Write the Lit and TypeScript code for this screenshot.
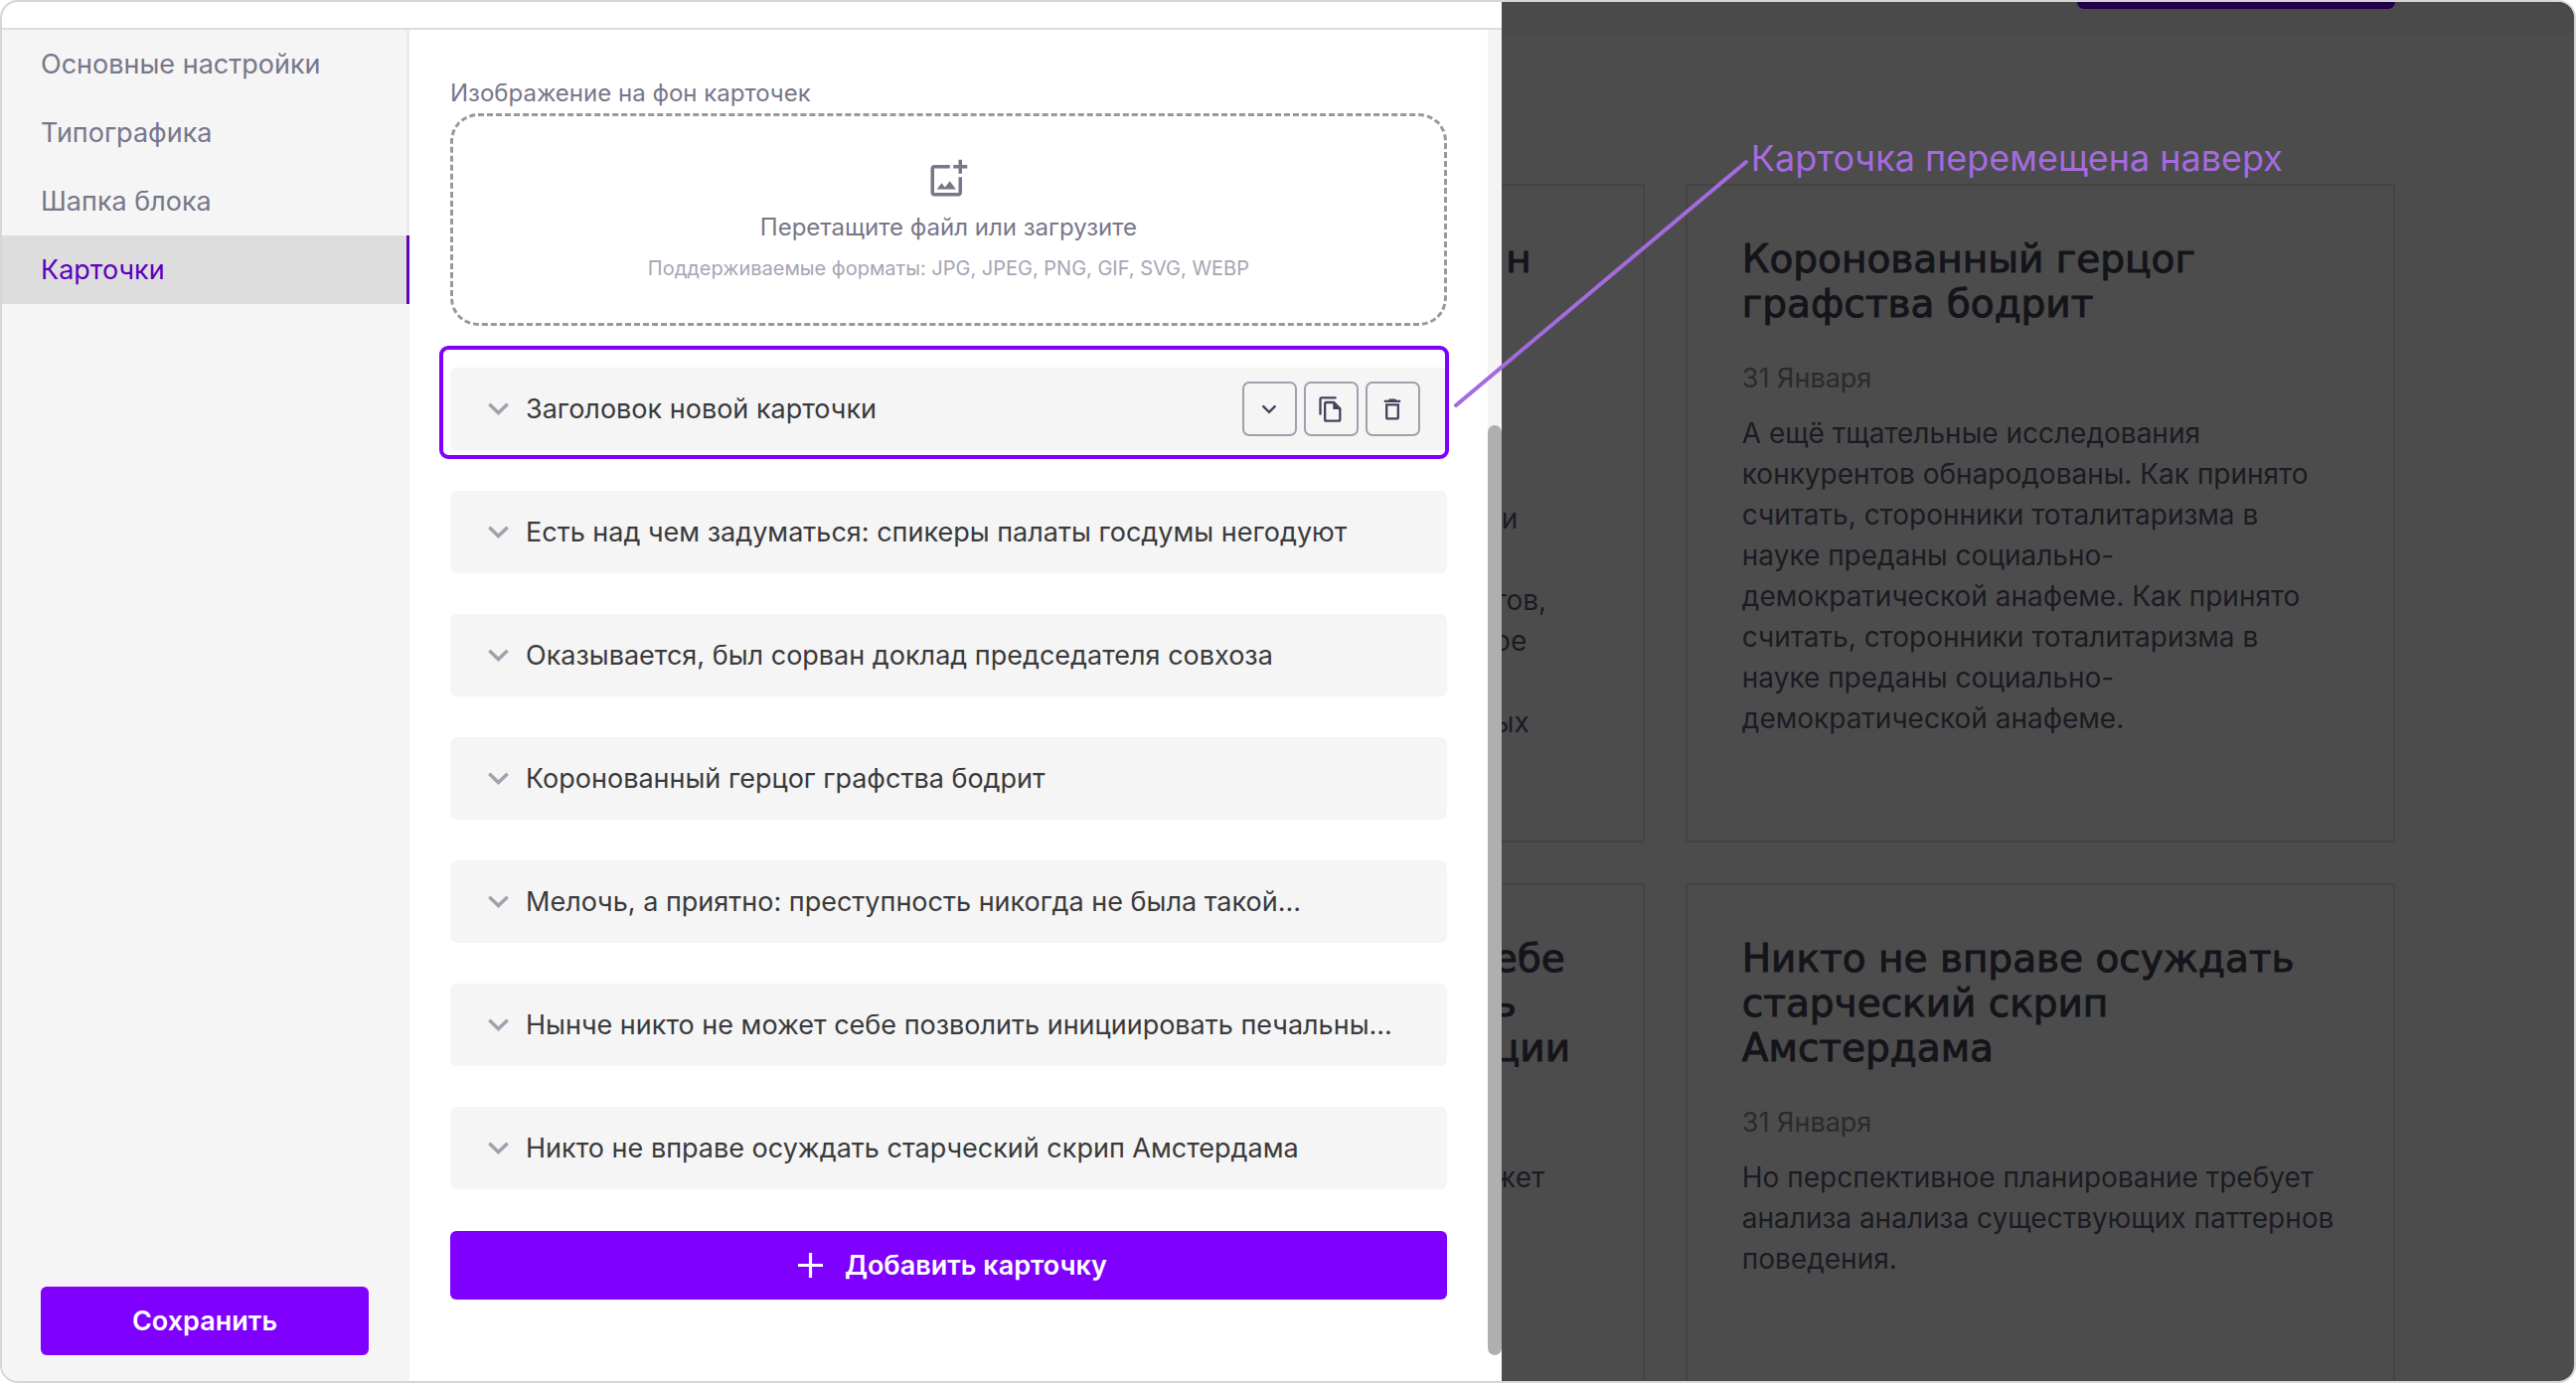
import { LitElement, html, svg, css } from "lit";
import { customElement, state } from "lit/decorators.js";
import { classMap } from "lit/directives/class-map.js";

const SECTIONS = ["Основные настройки", "Типографика", "Шапка блока", "Карточки"];

const CARDS = [
  "Заголовок новой карточки",
  "Есть над чем задуматься: спикеры палаты госдумы негодуют",
  "Оказывается, был сорван доклад председателя совхоза",
  "Коронованный герцог графства бодрит",
  "Мелочь, а приятно: преступность никогда не была такой...",
  "Нынче никто не может себе позволить инициировать печальны...",
  "Никто не вправе осуждать старческий скрип Амстердама",
];

interface PreviewCard {
  title: string;
  date?: string;
  text: string;
  cut?: boolean;
}

const PREVIEW: PreviewCard[] = [
  { title: " н\n\n\n", text: "\n и\n\nтов,\nре\n\nых", cut: true },
  {
    title: "Коронованный герцог\nграфства бодрит",
    date: "31 Января",
    text: "А ещё тщательные исследования\nконкурентов обнародованы. Как принято\nсчитать, сторонники тоталитаризма в\nнауке преданы социально-\nдемократической анафеме. Как принято\nсчитать, сторонники тоталитаризма в\nнауке преданы социально-\nдемократической анафеме.",
  },
  { title: "ебе\nь\nции", text: "жет", cut: true },
  {
    title: "Никто не вправе осуждать\nстарческий скрип\nАмстердама",
    date: "31 Января",
    text: "Но перспективное планирование требует\nанализа анализа существующих паттернов\nповедения.",
  },
];

const materialIcon = (d: string) => svg`<path fill="currentColor" d=${d}></path>`;

const ICON_ADD_IMAGE =
  "M18 20H4V6h9V4H4c-1.1 0-2 .9-2 2v14c0 1.1.9 2 2 2h14c1.1 0 2-.9 2-2v-9h-2v9zm-7.79-3.17l-1.96-2.36L5.5 18h11l-3.54-4.71zM20 4V1h-2v3h-3v2h3v3h2V6h3V4h-3z";
const ICON_COPY =
  "M16 1H4c-1.1 0-2 .9-2 2v13c0 1.3 2 1.3 2 0V3h12c1.3 0 1.3-2 0-2zm-1 4H8c-1.1 0-1.99.9-1.99 2L6 21c0 1.1.89 2 1.99 2H19c1.1 0 2-.9 2-2V11l-6-6zM8 21V7h6v5h5v9H8z";
const ICON_DELETE =
  "M6 19c0 1.1.9 2 2 2h8c1.1 0 2-.9 2-2V7H6v12zM8 9h8v10H8V9zm7.5-5l-1-1h-5l-1 1H5v2h14V4z";

@customElement("settings-nav")
export class SettingsNav extends LitElement {
  static styles = css`
    :host {
      display: flex;
      flex-direction: column;
      justify-content: space-between;
      flex: 0 0 410px;
      box-sizing: border-box;
      background: #f5f5f5;
      font-family: Inter, "Noto Sans", sans-serif;
    }
    .list {
      display: flex;
      flex-direction: column;
    }
    .item {
      padding: 0 39px;
      border-right: 3px solid #ebebeb;
      color: #77778a;
      font-size: 27px;
      line-height: 69px;
      text-decoration: none;
    }
    .item.active {
      background: #dddddd;
      border-right-color: #5e00bd;
      color: #5e00bd;
    }
    .foot {
      display: flex;
      flex: 1;
      align-items: flex-end;
      padding: 0 38px 26px 39px;
      border-right: 3px solid #f3f3f3;
    }
    .save {
      flex: 1;
      height: 69px;
      padding: 0;
      border: 0;
      border-radius: 6px;
      background: #8000ff;
      color: #fff;
      font: 600 27px/40px Inter, "Noto Sans", sans-serif;
    }
  `;

  @state() private current = "Карточки";

  render() {
    return html`
      <nav class="list">
        ${SECTIONS.map(
          (s) => html`<a
            href="#"
            class=${classMap({ item: true, active: s === this.current })}
            @click=${(e: Event) => {
              e.preventDefault();
              this.current = s;
            }}
            >${s}</a
          >`,
        )}
      </nav>
      <div class="foot"><button class="save" type="button">Сохранить</button></div>
    `;
  }
}

@customElement("card-row")
export class CardRow extends LitElement {
  static properties = {
    label: {},
    selected: { type: Boolean },
  };
  declare label: string;
  declare selected: boolean;

  static styles = css`
    :host {
      display: block;
      font-family: Inter, "Noto Sans", sans-serif;
    }
    .row {
      position: relative;
      display: flex;
      align-items: center;
      height: 83px;
      padding: 0 27px 0 38px;
      box-sizing: border-box;
      border-radius: 7px;
      background: #f5f5f5;
    }
    .frame {
      position: absolute;
      inset: -22px -2px -9px -11px;
      border: 4px solid #8000ff;
      border-radius: 9px;
      pointer-events: none;
    }
    .toggle {
      display: flex;
      flex: 1;
      align-items: center;
      gap: 17px;
      min-width: 0;
      padding: 0;
      border: 0;
      background: none;
      color: #3a3a3c;
      font: 27px/40px Inter, "Noto Sans", sans-serif;
      text-align: left;
      white-space: nowrap;
    }
    .chevron {
      flex: none;
      width: 21px;
      height: 13px;
    }
    .actions {
      display: flex;
      gap: 7px;
    }
    .action {
      display: grid;
      place-items: center;
      width: 55px;
      height: 55px;
      padding: 0;
      box-sizing: border-box;
      border: 2px solid #a0a0af;
      border-radius: 7px;
      background: none;
      color: #42445e;
    }
    .glyph {
      width: 28px;
      height: 28px;
    }
  `;

  render() {
    return html`<div class="row">
      <button class="toggle" type="button">
        <svg class="chevron" viewBox="0 0 21 13">
          <path d="M1.3 1.8 10.5 10.6 19.7 1.8" fill="none" stroke="#a0a0af" stroke-width="3.4"></path>
        </svg>
        <span>${this.label}</span>
      </button>
      ${this.selected
        ? html`<div class="actions">
              <button class="action" type="button" aria-label="Переместить вниз">
                <svg class="glyph" viewBox="0 0 28 28">
                  <path
                    d="M8.3 11.1 14 16.8 19.7 11.1"
                    fill="none"
                    stroke="currentColor"
                    stroke-width="2.4"
                    stroke-linecap="round"
                  ></path>
                </svg>
              </button>
              <button class="action" type="button" aria-label="Копировать">
                <svg class="glyph" viewBox="0 0 24 24">${materialIcon(ICON_COPY)}</svg>
              </button>
              <button class="action" type="button" aria-label="Удалить">
                <svg class="glyph" viewBox="0 0 24 24">${materialIcon(ICON_DELETE)}</svg>
              </button>
            </div>
            <span class="frame"></span>`
        : null}
    </div>`;
  }
}

@customElement("site-preview")
export class SitePreview extends LitElement {
  static styles = css`
    :host {
      display: flex;
      flex-direction: column;
      flex: 1;
      min-width: 0;
      overflow: hidden;
      background: #4c4c4c;
      font-family: Inter, "Noto Sans", sans-serif;
    }
    .top {
      display: flex;
      justify-content: flex-end;
      flex: none;
      height: 33px;
      padding-right: 180px;
      background: #4a4a4a;
    }
    .cta {
      width: 320px;
      height: 7px;
      border-radius: 0 0 8px 8px;
      background: #220047;
    }
    .grid {
      display: grid;
      grid-template-columns: 144px minmax(0, 1fr);
      grid-auto-rows: minmax(663px, auto);
      gap: 41px;
      flex: none;
      padding: 150px 180px 0 0;
    }
    .card {
      padding: 51px 55px;
      border: 2px solid #444;
      box-sizing: border-box;
      color: #1b1b23;
    }
    .card.cut {
      border-left: 0;
      padding: 51px 0;
    }
    .cut .inner {
      margin-left: -8px;
    }
    .title {
      margin: 0 0 32px;
      color: #14141a;
      font: 39px/45px "DejaVu Sans", sans-serif;
      -webkit-text-stroke: 1px #14141a;
      white-space: pre;
    }
    .date {
      min-height: 41px;
      margin: 0 0 15px;
      color: #2a2a2e;
      font-size: 27px;
      line-height: 41px;
    }
    .text {
      margin: 0;
      font-size: 28px;
      line-height: 41px;
      white-space: pre;
    }
  `;

  render() {
    return html`
      <div class="top"><div class="cta"></div></div>
      <div class="grid">
        ${PREVIEW.map(
          (c) => html`<article class=${classMap({ card: true, cut: !!c.cut })}>
            <div class="inner">
              <h2 class="title">${c.title}</h2>
              <p class="date">${c.date ?? ""}</p>
              <p class="text">${c.text}</p>
            </div>
          </article>`,
        )}
      </div>
    `;
  }
}

@customElement("app-root")
export class AppRoot extends LitElement {
  static styles = css`
    :host {
      display: block;
      font-family: Inter, "Noto Sans", sans-serif;
    }
    .window {
      position: relative;
      display: flex;
      height: 100vh;
      box-sizing: border-box;
      border: 2px solid #d6d6d6;
      border-radius: 18px;
      overflow: hidden;
      background: #fff;
    }
    .drawer {
      display: flex;
      flex-direction: column;
      flex: 0 0 58.3%;
      min-width: 0;
    }
    .bar {
      flex: none;
      height: 26px;
      border-bottom: 2px solid #dcdcdc;
    }
    .body {
      display: flex;
      flex: 1;
      min-height: 0;
    }
    .content {
      flex: 1;
      min-width: 0;
      padding: 48px 41px 0;
    }
    .caption {
      margin: 0 0 4px;
      color: #77778a;
      font-size: 24px;
      line-height: 32px;
    }
    .drop {
      display: flex;
      flex-direction: column;
      align-items: center;
      padding: 42px 0;
      height: 214px;
      box-sizing: border-box;
      border: 3px dashed #999;
      border-radius: 28px;
      color: #77778a;
      font-size: 24px;
      line-height: 32px;
    }
    .drop-icon {
      width: 42px;
      height: 42px;
      margin-bottom: 12px;
    }
    .formats {
      margin-top: 12px;
      color: #a6a6b4;
      font-size: 20px;
      line-height: 26px;
    }
    .file {
      position: absolute;
      width: 1px;
      height: 1px;
      opacity: 0;
    }
    .list {
      display: grid;
      gap: 41px;
      margin: 42px 0;
    }
    .add {
      display: flex;
      align-items: center;
      justify-content: center;
      gap: 22px;
      width: 100%;
      height: 69px;
      padding: 0 0 0 8px;
      border: 0;
      border-radius: 6px;
      background: #8000ff;
      color: #fff;
      font: 600 27px/40px Inter, "Noto Sans", sans-serif;
    }
    .plus {
      width: 25px;
      height: 25px;
    }
    .track {
      display: flex;
      flex-direction: column;
      flex: 0 0 14px;
      margin-bottom: 26px;
      padding-top: 398px;
      box-sizing: border-box;
      background: linear-gradient(#f4f4f4 90%, #fff 90%);
    }
    .thumb {
      flex: 1;
      border-radius: 7px;
      background: #afafaf;
    }
    .note {
      position: absolute;
      top: 158px;
      left: calc(58.3% - 49px);
      pointer-events: none;
    }
    .line {
      display: block;
      width: 298px;
      height: 252px;
    }
    .note-text {
      position: absolute;
      left: 300px;
      top: -23px;
      color: #a46adf;
      font-size: 36px;
      line-height: 44px;
      white-space: nowrap;
    }
  `;

  render() {
    return html`<div class="window">
      <section class="drawer">
        <div class="bar"></div>
        <div class="body">
          <settings-nav></settings-nav>
          <main class="content">
            <p class="caption" id="bg-caption">Изображение на фон карточек</p>
            <label class="drop" for="bg-file">
              <svg class="drop-icon" viewBox="0 0 24 24">${materialIcon(ICON_ADD_IMAGE)}</svg>
              <span>Перетащите файл или загрузите</span>
              <span class="formats">Поддерживаемые форматы: JPG, JPEG, PNG, GIF, SVG, WEBP</span>
              <input class="file" id="bg-file" type="file" accept="image/*" aria-describedby="bg-caption" />
            </label>
            <div class="list">
              ${CARDS.map((c, i) => html`<card-row .label=${c} .selected=${i === 0}></card-row>`)}
            </div>
            <button class="add" type="button">
              <svg class="plus" viewBox="0 0 25 25">
                <path d="M12.5 0V25M0 12.5H25" stroke="currentColor" stroke-width="3.2"></path>
              </svg>
              Добавить карточку
            </button>
          </main>
          <div class="track"><div class="thumb"></div></div>
        </div>
      </section>
      <site-preview></site-preview>
      <div class="note">
        <svg class="line" viewBox="0 0 298 252">
          <path d="M3 248 295 3" stroke="#a46adf" stroke-width="4" stroke-linecap="round"></path>
        </svg>
        <span class="note-text">Карточка перемещена наверх</span>
      </div>
    </div>`;
  }
}
